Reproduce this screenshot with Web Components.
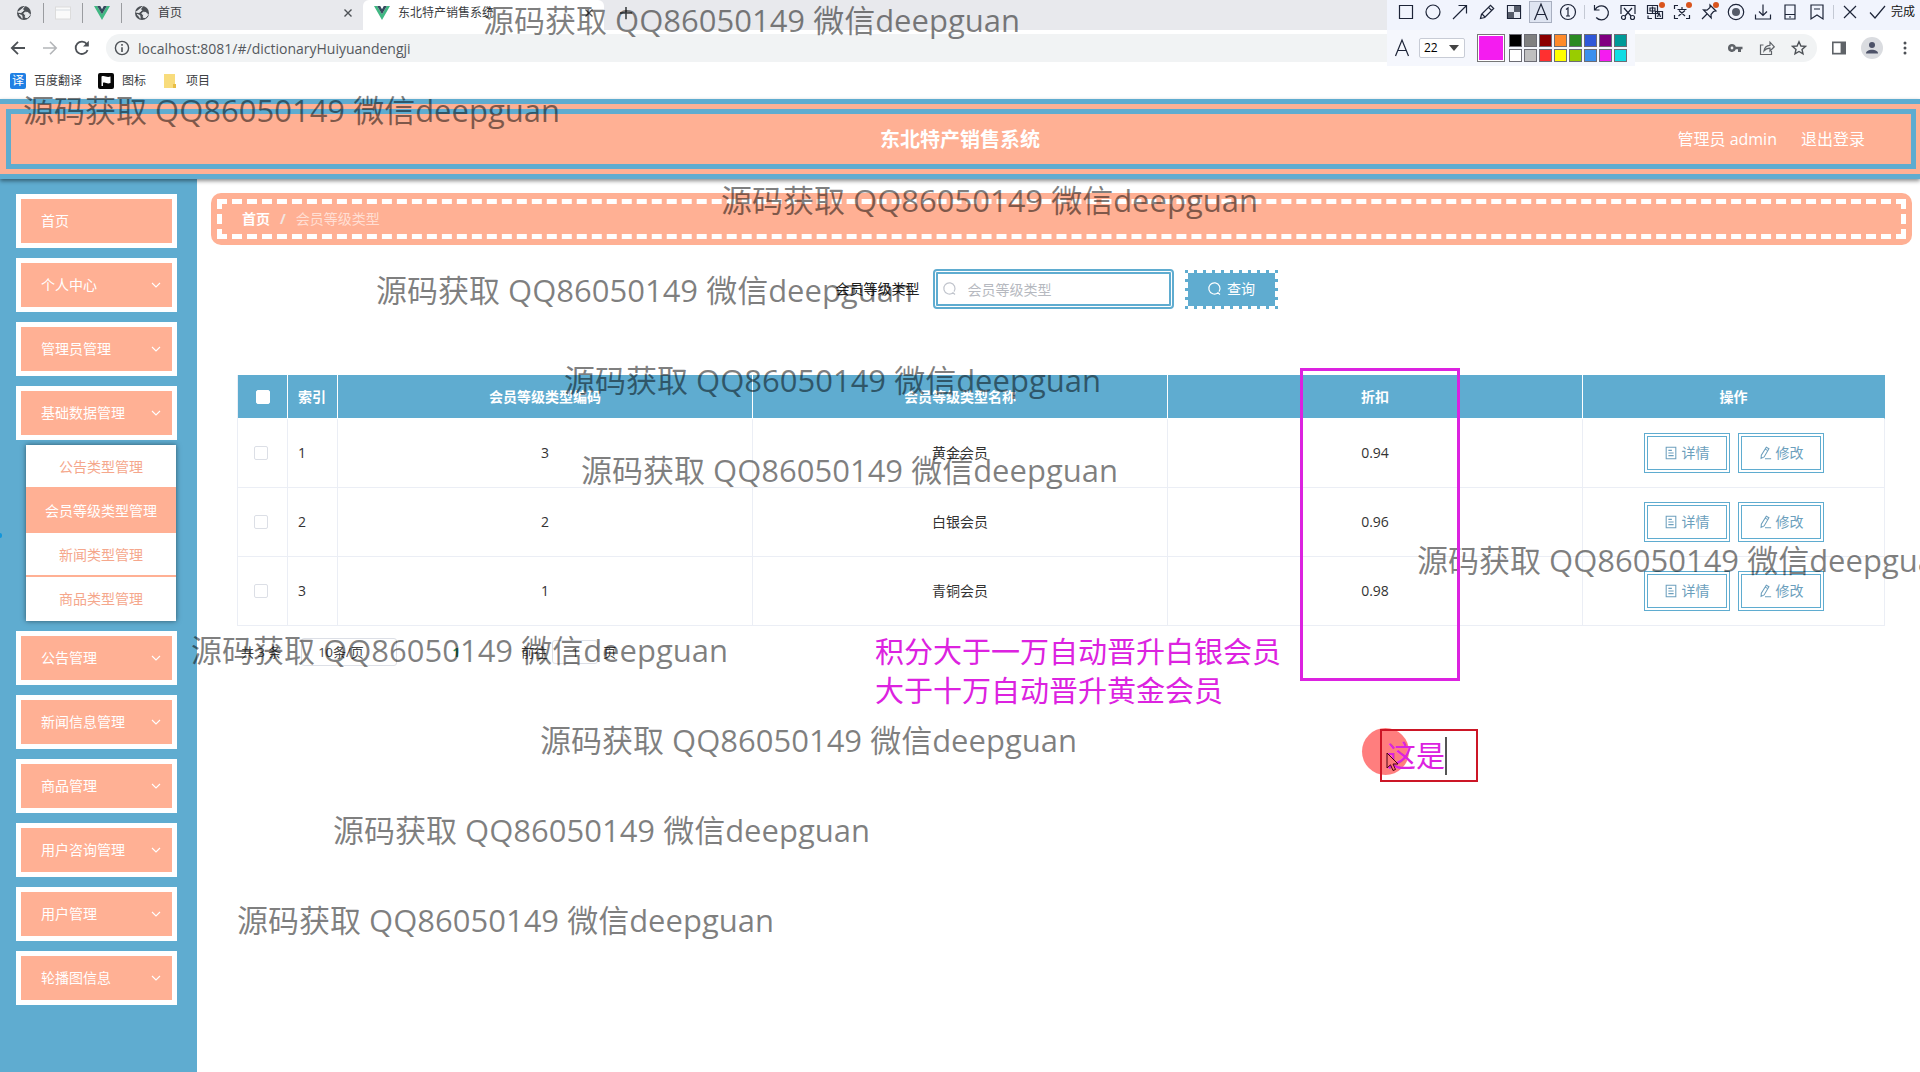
<!DOCTYPE html>
<html lang="zh-CN">
<head>
<meta charset="utf-8">
<title>东北特产销售系统</title>
<style>
  :root { --blue: #5facd0; --peach: #ffb094; --magenta: #dc22e0; }
  html, body { margin: 0; }
  body { font: 14px/20px "Open Sans", "Noto Sans CJK SC", sans-serif; color: #333; background: #fff; }
</style>
</head>
<body>
<desktop-view></desktop-view>
<script>
class Base extends HTMLElement {
  constructor() {
    super();
    this.attachShadow({ mode: 'open' }).innerHTML =
      `<style>*{box-sizing:border-box}button,input,select{font:inherit;color:inherit;margin:0}button{cursor:pointer}a{color:inherit;text-decoration:none}svg{display:block;flex:none}${this.constructor.css || ''}</style>` + this.constructor.html;
  }
}
const define = (name, css, html) => customElements.define(name, class extends Base { static css = css; static html = html; });

/* ---------- icons ---------- */
const S = 'fill="none" stroke="#1d2438" stroke-width="1.2"';
const DOT = '<circle cx="17" cy="3" r="3" fill="#d9541e"/>';
const ICONS = {
  globe: ['0 0 16 16', '<circle cx="8" cy="8" r="7" fill="#4d5156"/><path d="M8.5 1.5 6.5 4l1.2 1.4L5 7.5 1.6 7M9 7.2l3 .3 2 2.2-2.5 3-2.3-.4.3-2.3L7.8 8.600zM3 9.500l2.800.900.4 3" fill="#e8eaed" stroke="#e8eaed" stroke-width="1"/>'],
  page: ['0 0 16 16', '<rect x=".5" y="2" width="15" height="12" fill="#fafafa" stroke="#dcdcdc"/><path d="M1 5h14" stroke="#d6dce2"/>'],
  vue: ['0 0 16 16', '<path d="M0 1h3.200L8 9.300 12.800 1H16L8 15z" fill="#41b883"/><path d="M3.200 1h3L8 4.200 9.800 1h3L8 9.300z" fill="#35495e"/>'],
  close: ['0 0 16 16', '<path d="m4 4 8 8m0-8-8 8" stroke="#4d5156" stroke-width="1.600"/>'],
  plus: ['0 0 16 16', '<path d="M8 1v14M1 8h14" stroke="#3c4043" stroke-width="1.800"/>'],
  back: ['0 0 16 16', '<path d="M15 8H2m6-6.200L1.800 8 8 14.200" fill="none" stroke="#4d5156" stroke-width="1.800"/>'],
  forward: ['0 0 16 16', '<path d="M1 8h13M8 1.800 14.200 8 8 14.200" fill="none" stroke="#b4b6b9" stroke-width="1.600"/>'],
  reload: ['0 0 16 16', '<path d="M13.600 10.200A6.200 6.200 0 1 1 12.800 4" fill="none" stroke="#4d5156" stroke-width="1.800"/><path d="M14.800.8v5.800H9z" fill="#4d5156"/>'],
  info: ['0 0 16 16', '<circle cx="8" cy="8" r="6.600" fill="none" stroke="#4d5156" stroke-width="1.400"/><path d="M8 7.200V12M8 4v1.800" stroke="#4d5156" stroke-width="1.600"/>'],
  key: ['0 0 16 16', '<path d="M5 4a4 4 0 1 0 3.800 5.200H11V12h3V9.200h1.500V6.800H8.800A4 4 0 0 0 5 4zm0 2.600a1.400 1.400 0 1 1 0 2.800 1.400 1.400 0 0 1 0-2.800z" fill="#5f6368"/>'],
  share: ['0 0 16 16', '<path d="M4.500 5H1.500v9.500h11V11M5 11c.4-4 2.500-5.500 6-5.700V2.200L15.300 6.800 11 11V8.200C8 8.200 6.500 9 5 11z" fill="none" stroke="#5f6368" stroke-width="1.200"/>'],
  star: ['0 0 16 16', '<path d="m8 1.800 1.900 4.200 4.500.4L11 9.400l1 4.500-4-2.400-4 2.400 1-4.500-3.400-3 4.500-.4z" fill="none" stroke="#4d5156" stroke-width="1.400"/>'],
  panel: ['0 0 16 16', '<path d="M1 1.500h14v13H1z" fill="#5f6368"/><path d="M2.600 3.200h7v9.600h-7z" fill="#fff"/>'],
  user: ['0 0 22 22', '<circle cx="11" cy="11" r="11" fill="#dadce0"/><circle cx="11" cy="8" r="3" fill="#4d5268"/><path d="M5 16.500c0-5 12-5 12 0z" fill="#4d5268"/>'],
  more: ['0 0 16 16', '<g fill="#4d5156"><circle cx="8" cy="3" r="1.500"/><circle cx="8" cy="8" r="1.500"/><circle cx="8" cy="13" r="1.500"/></g>'],
  flag: ['0 0 16 16', '<rect width="16" height="16" rx="2" fill="#080808"/><path d="M3.500 13V3.500c3-1.500 5 1.500 9 0v6.500c-4 1.500-5-1.500-7.500-.2V13" fill="#fff"/>'],
  folder: ['0 0 16 16', '<path d="M2 1h11v14H2z" fill="#f8dc7c"/><path d="M11 11h3v4h-3z" fill="#e8bd45"/>'],
  down: ['0 0 16 16', '<path d="m4 6 4 4 4-4" fill="none" stroke="#fff" stroke-width="1.100"/>'],
  search: ['0 0 16 16', '<path d="M13 13.500 11 11.700A5.600 5.600 0 1 1 12 10.600" fill="none" stroke="currentColor" stroke-width="1.200"/>'],
  doc: ['0 0 16 16', '<path d="M2.500 1.500h11v13h-11zM5 5h4M5 8h6M5 11h6" fill="none" stroke="currentColor" stroke-width="1.200"/>'],
  edit: ['0 0 16 16', '<path d="m9.500 1.500 3 1.700-5.500 9.300-3.500 1.700.3-3.800zM8.300 3.600l3 1.700M8 14.500h7" fill="none" stroke="currentColor" stroke-width="1.200"/>'],
  tRect: ['0 0 20 20', `<path d="M3.500 3.500h13v13h-13z" ${S}/>`],
  tOval: ['0 0 20 20', `<circle cx="10" cy="10" r="7" ${S}/>`],
  tArrow: ['0 0 20 20', `<path d="M3 17 16.500 3.500M8.500 3.500h8v8" ${S}/>`],
  tPen: ['0 0 20 20', `<path d="m3.500 16.500 1-4.200 9-9 3.200 3.200-9 9zM11.500 5.300l3.200 3.200M5 12l3 3" ${S}/>`],
  tMosaic: ['0 0 20 20', `<path d="M3.500 3.500h13v13h-13z" ${S}/><path d="M10 4h6v6h-6zM4 10h6v6H4z" fill="#555b69"/><path d="M4 4h6v6H4zM10 10h6v6h-6z" fill="#e4e8f2"/>`],
  tText: ['0 0 20 20', `<path d="M3.500 18 10 2l6.500 16M6 12.500h8" ${S}/>`],
  tNum: ['0 0 20 20', `<circle cx="10" cy="10" r="7.500" ${S}/><path d="m8 7.500 2-1.500v8M8 14h4" ${S}/>`],
  tUndo: ['0 0 20 20', `<path d="M3.500 3v5h5M4 8a7 7 0 1 1 1.200 7.500" ${S}/>`],
  tCut: ['0 0 20 20', `<path d="M3 12V3.500h14V12M6 6l7 8m1-8-7 8" ${S}/><circle cx="5.500" cy="15.500" r="2" ${S}/><circle cx="14.500" cy="15.500" r="2" ${S}/>`],
  tTrans: ['0 0 20 20', `<path d="M2.500 3.500h10v8h-10zM5 6h5v3H5zM7.500 4.500v7M10.500 9.500h7v7h-7zM12.500 15l1.500-4 1.500 4M3 13.500v3h4" ${S}/>${DOT}`],
  tOcr: ['0 0 20 20', `<path d="M2.500 7V3.500H6M2.500 13v3.500H6M17.500 13v3.500H14M5.500 7.500h9M10 5v2.500M7 8.500l6 5.500m0-5.500L6.500 14" ${S}/>${DOT}`],
  tPin: ['0 0 20 20', `<path d="m11 3 6 6-2.500.5-2.500 3 .2 3.500L4.500 8l3.500.2 3-2.700zM8 12l-5 5" ${S}/>${DOT}`],
  tRec: ['0 0 20 20', `<circle cx="10" cy="10" r="7.700" ${S}/><circle cx="10" cy="10" r="4" fill="#555b69"/>`],
  tSave: ['0 0 20 20', `<path d="M10 2.500v11M6 9.500l4 4 4-4M2.500 12.500v4.500h15v-4.500" ${S}/>`],
  tPhone: ['0 0 20 20', `<path d="M5 3h10v14H5zM5 12.500h10M9 15h2" ${S}/>`],
  tMark: ['0 0 20 20', `<path d="M4 3h12v14l-6-4-6 4zM7 7h6" ${S}/>`],
  tX: ['0 0 20 20', `<path d="m4 4 12 12M16 4 4 16" ${S}/>`],
  tOk: ['0 0 20 20', `<path d="m3 10.500 5 5.500 10-12" ${S}/>`]
};
customElements.define('ui-icon', class extends HTMLElement {
  connectedCallback() {
    const [vb, body] = ICONS[this.getAttribute('name')];
    const s = this.getAttribute('size') || 16;
    this.attachShadow({ mode: 'open' }).innerHTML =
      `<style>:host{display:block;flex:none}svg{display:block}</style><svg width="${s}" height="${s}" viewBox="${vb}" aria-hidden="true">${body}</svg>`;
  }
});
const ic = (n, s = 16) => `<ui-icon name="${n}" size="${s}"></ui-icon>`;

/* ---------- browser window ---------- */
define('browser-bar', `
  :host{display:block;color:#3c4043;background:#fff}
  .tabs{display:flex;align-items:center;height:30px;background:#e8e9ed;font-size:12px;line-height:24px;padding:0 0 4px 16px}
  .mini{display:flex;gap:11px;align-items:center}
  .mini i{width:1px;height:20px;background:#9a9ca0}
  .tab{display:flex;align-items:center;gap:8px}
  .tab span{flex:1}
  .first{width:229px;margin-left:12px;padding-right:8px}
  .on{width:241px;margin-bottom:-4px;height:30px;background:#fff;border-radius:6px 6px 0 0;padding:0 8px 4px 11px}
  .plus{margin-left:15px}
  .nav{display:flex;align-items:center;height:36px;padding:0 7px 0 10px}
  .nav>ui-icon{margin-right:16px}
  .addr{flex:1;display:flex;align-items:center;gap:8px;height:28px;border-radius:14px;background:#f1f3f4;padding:0 10px 0 8px}
  .addr input{flex:1;border:0;background:none;padding:0;font-size:14px;height:28px;color:#55595e;outline:0}
  .acts{display:flex;gap:16px}
  .end{display:flex;align-items:center;gap:14px;margin-left:14px}
  .marks{display:flex;gap:16px;height:33px;padding:0 10px 4px;align-items:center;font-size:12px}
  .marks a{display:flex;gap:8px;align-items:center}
  .tr{width:16px;height:16px;border-radius:2px;background:#2080e4;color:#fff;text-align:center;line-height:16px}
`, `
  <div class="tabs">
    <div class="mini">${ic('globe')}<i></i>${ic('page')}<i></i>${ic('vue')}<i></i></div>
    <div class="tab first">${ic('globe')}<span>首页</span>${ic('close', 14)}</div>
    <div class="tab on">${ic('vue')}<span>东北特产销售系统</span>${ic('close', 14)}</div>
    <div class="plus">${ic('plus', 14)}</div>
  </div>
  <div class="nav">
    ${ic('back')}${ic('forward')}${ic('reload')}
    <div class="addr">${ic('info')}<input aria-label="地址" value="localhost:8081/#/dictionaryHuiyuandengji">
      <div class="acts">${ic('key')}${ic('share')}${ic('star')}</div></div>
    <div class="end">${ic('panel')}${ic('user', 22)}${ic('more')}</div>
  </div>
  <nav class="marks">
    <a href="#"><span class="tr">译</span>百度翻译</a><a href="#">${ic('flag')}图标</a><a href="#">${ic('folder')}项目</a>
  </nav>`);

/* ---------- screenshot tool ---------- */
const tools = ['tRect','tOval','tArrow','tPen','tMosaic','tText','tNum','|','tUndo','tCut','tTrans','tOcr','tPin','tRec','tSave','tPhone','tMark','|','tX','tOk'];
const swatches = ['#000','#808080','#8b0000','#ff8a2a','#2c8a22','#3058d8','#800080','#009a98','#fff','#c0c0c0','#ff3030','#ffff00','#99cc00','#3a90ee','#f41cf0','#10dce4'];
define('capture-toolbar', `
  :host{display:block;position:absolute;top:0;right:0}
  .row{display:flex;align-items:center;height:30px;background:#f1f4fd;padding:0 4px 6px 5px;font-size:12px;color:#111}
  button{border:0;background:none;padding:0;display:flex;align-items:center;justify-content:center;width:27px;height:22px}
  button.on{width:23px;margin:0 2px;border:1px solid #a8afc0;background:#dfe5f2}
  i{width:1px;height:14px;background:#c4c9d4;margin:0 2px 0 3px}
  .done{width:26px;white-space:nowrap}
  .opt{display:flex;width:248px;height:36px;align-items:center;background:#f5f7fd;padding-left:5px}
  .size{position:relative;margin:0 12px 0 7px;display:flex;align-items:center}
  select{appearance:none;width:46px;height:20px;border:1px solid #c8ccd6;border-radius:2px;background:#fff;padding:0 4px;font-size:12px;line-height:18px;color:#000}
  .size svg{position:absolute;right:6px}
  .big{width:28px;height:28px;background:#f41cf0;border:1px solid #777;outline:1px solid #fff;outline-offset:-2px}
  .pal{display:grid;grid-template-columns:repeat(8,13px);gap:2px;margin-left:4px}
  .pal b{height:13px;border:1px solid #6c6c74}
`, `
  <div class="row">${tools.map(t => t === '|' ? '<i></i>' : `<button class="${t === 'tText' ? 'on' : ''}" aria-label="${t.slice(1)}">${ic(t, 20)}</button>`).join('')}<button class="done">完成</button></div>
  <div class="opt">${ic('tText', 20)}
    <div class="size"><select aria-label="字号"><option>22</option></select><svg width="10" height="6"><path d="M0 0h10L5 6z" fill="#444"/></svg></div>
    <div class="big"></div><div class="pal">${swatches.map(c => `<b style="background:${c}"></b>`).join('')}</div>
  </div>`);

/* ---------- application ---------- */
define('app-header', `
  :host{display:block;position:relative;background:var(--peach);border:solid var(--blue);border-width:5px 0;padding:5px 4px 5px 6px;box-shadow:0 2px 4px rgba(0,0,0,.45);color:#fff}
  .in{display:grid;grid-template-columns:1fr auto 1fr;align-items:center;height:60px;border:5px solid var(--blue);padding:0 46px 0 44px}
  h1{grid-column:2;margin:0;font-size:20px;line-height:30px;font-weight:700;padding-top:2px}
  .r{display:flex;justify-content:flex-end;gap:24px;font-size:16px;line-height:24px}
`, `<div class="in"><h1>东北特产销售系统</h1><div class="r"><span>管理员 admin</span><a href="#">退出登录</a></div></div>`);

define('side-item', `
  :host{display:block}
  button{display:flex;align-items:center;justify-content:space-between;width:100%;height:54px;border:5px solid #fff;background:var(--peach);color:#fff;padding:0 8px 0 20px;text-align:left}
  :host([plain]) ui-icon{display:none}
`, `<button><span><slot></slot></span>${ic('down')}</button>`);

define('side-menu', `
  :host{display:block;width:197px;flex:none;background:var(--blue);padding:15px 20px 67px 16px}
  nav{display:flex;flex-direction:column;gap:10px}
  .sub{margin:-5px 1px 0 10px;background:#fff;box-shadow:0 0 5px rgba(0,0,0,.5);color:#f5a78c}
  .sub a{display:block;height:44px;line-height:44px;text-align:center;border-bottom:2px solid var(--peach);white-space:nowrap}
  .sub .on{background:var(--peach);color:#fff}
  .sub a:last-child{border-color:#fff}
`, `<nav>
  <side-item plain>首页</side-item><side-item>个人中心</side-item><side-item>管理员管理</side-item><side-item>基础数据管理</side-item>
  <div class="sub"><a href="#">公告类型管理</a><a href="#" class="on">会员等级类型管理</a><a href="#">新闻类型管理</a><a href="#">商品类型管理</a></div>
  <side-item>公告管理</side-item><side-item>新闻信息管理</side-item><side-item>商品管理</side-item><side-item>用户咨询管理</side-item><side-item>用户管理</side-item><side-item>轮播图信息</side-item>
</nav>`);

define('bread-crumb', `
  :host{display:block;background:var(--peach);border-radius:10px;padding:6px}
  .in{display:flex;gap:10px;align-items:center;height:40px;border:5px dashed #fff;padding:0 20px;color:rgba(255,255,255,.6)}
  a{color:#fff;font-weight:700}i{color:#f2e6e2;font-style:normal;font-weight:700}
`, `<div class="in"><a href="#">首页</a><i>/</i><span>会员等级类型</span></div>`);

define('search-form', `
  :host{display:block}
  form{display:flex;justify-content:center;align-items:center;padding-right:10px}
  label{color:#222;margin-right:13px}
  .box{display:flex;align-items:center;gap:10px;width:241px;height:40px;border:5px double var(--blue);border-radius:4px;padding:0 4px;color:#c0c4cc}
  input{border:0;outline:0;padding:0;width:100%;min-width:0;background:none;height:28px}
  input::placeholder{color:#b6b9c0;opacity:1}
  button{display:flex;align-items:center;justify-content:center;gap:4px;width:93px;height:39px;margin-left:11px;border:3px solid transparent;color:#fff;padding:0;
    --h:repeating-linear-gradient(90deg,var(--blue) 0 3px,#fff 3px 9px);--v:repeating-linear-gradient(var(--blue) 0 3px,#fff 3px 9px);
    background:linear-gradient(var(--blue),var(--blue)) padding-box,var(--h) top/100% 3px no-repeat border-box,var(--h) bottom/100% 3px no-repeat border-box,var(--v) left/3px 100% no-repeat border-box,var(--v) right/3px 100% no-repeat border-box}
`, `<form onsubmit="return false"><label for="q">会员等级类型</label><div class="box">${ic('search')}<input id="q" placeholder="会员等级类型"></div><button>${ic('search')}查询</button></form>`);

define('line-button', `
  :host{display:block}
  button{display:flex;align-items:center;justify-content:center;gap:4px;width:86px;height:40px;border:4px double var(--blue);background:#fff;color:#6c9fbd;padding:0}
`, `<button><slot name="icon"></slot><slot></slot></button>`);

const rows = [['1','3','黄金会员','0.94'],['2','2','白银会员','0.96'],['3','1','青铜会员','0.98']];
define('level-table', `
  :host{display:block}
  table{width:100%;table-layout:fixed;border-collapse:separate;border-spacing:0;border-left:1px solid #ebeef5}
  th,td{text-align:center;padding:0;border-right:1px solid #ebeef5;border-bottom:1px solid #ebeef5}
  th{height:44px;background:var(--blue);color:#fff;font-weight:700;border-color:#fff}
  th:last-child{border-right-color:var(--blue)}
  td{height:69px;color:#333}
  .c{width:50px}.op{width:302px}
  tr>:nth-child(2){text-align:left;padding-left:10px}
  input{appearance:none;display:block;width:14px;height:14px;border:1px solid #dcdfe6;border-radius:2px;background:#fff;margin:0 0 0 16px}
  th input{margin-left:18px;border-color:#fff}
  .b{display:flex;gap:8px;justify-content:center}
`, `<table><thead><tr><th class="c"><input type="checkbox" aria-label="全选"></th><th class="c">索引</th><th>会员等级类型编码</th><th>会员等级类型名称</th><th>折扣</th><th class="op">操作</th></tr></thead>
<tbody>${rows.map(r => `<tr><td><input type="checkbox" aria-label="选择 ${r[0]}"></td>${r.map(v => `<td>${v}</td>`).join('')}<td><div class="b"><line-button><ui-icon slot="icon" name="doc" size="14"></ui-icon>详情</line-button><line-button><ui-icon slot="icon" name="edit" size="14"></ui-icon>修改</line-button></div></td></tr>`).join('')}</tbody></table>`);

define('page-pager', `
  :host{display:flex;align-items:center;height:28px;font-size:13px;color:#444;padding-left:4px}
  select{appearance:none;width:96px;height:28px;border:1px solid #dcdfe6;border-radius:3px;background:#fff;padding:0 16px;margin:0 54px 0 20px}
  button{border:0;background:none;padding:0;color:#2a8a63;font-weight:700;width:10px}
  label{display:flex;align-items:center;gap:5px;margin-left:60px}
  input{width:46px;height:24px;border:1px solid #dcdfe6;border-radius:3px;text-align:center;padding:0}
`, `<span>共 3 条</span><select aria-label="每页条数"><option>10条/页</option></select><button>1</button><label>前往<input value="1">页</label>`);

/* ---------- overlays ---------- */
define('water-mark', `
  :host{position:absolute;font-size:31px;line-height:40px;color:rgba(0,0,0,.5);white-space:nowrap;pointer-events:none}
`, `<slot></slot>`);

define('capture-notes', `
  .frame{position:absolute;left:1300px;top:368px;width:160px;height:313px;border:3px solid var(--magenta)}
  .note{position:absolute;left:875px;top:632px;margin:0;font-size:29px;line-height:39px;color:var(--magenta);white-space:nowrap}
  .edit{position:absolute;left:1380px;top:729px;display:flex;align-items:center;width:98px;height:53px;border:2px solid #cc1626;padding-left:5px}
  .edit input{width:58px;height:40px;border:0;padding:0;background:none;outline:0;font-size:29px;line-height:40px;color:var(--magenta)}
  .edit i{width:2px;height:38px;background:#555}
  .spot{position:absolute;left:1362px;top:728px;width:47px;height:47px;border-radius:50%;background:rgba(255,20,20,.55)}
  .ptr{position:absolute;left:1386px;top:752px}
`, `<div class="frame"></div><p class="note">积分大于一万自动晋升白银会员<br>大于十万自动晋升黄金会员</p>
<div class="spot"></div><div class="edit"><input aria-label="标注文字" value="这是"><i></i></div>
<svg class="ptr" width="13" height="20"><path d="M1 1v15l3.500-3.200L7 18.500l2.500-1-2.500-5.500h5z" fill="#f77" stroke="#4a0010"/></svg>`);

const marks = [[483,0],[23,90],[721,180],[376,270],[564,360],[581,450],[1417,540],[191,630],[540,720],[333,810],[237,900]];
define('desktop-view', `
  :host{display:flex;flex-direction:column;position:relative;min-height:100vh;overflow:hidden}
  .body{display:flex;flex:1}
  main{flex:1;min-width:0;padding:14px 8px 40px 14px}
  search-form{margin:24px 0 66px}
  .list{padding:0 27px 0 26px}
  page-pager{margin-top:12px}
  .dot{position:absolute;left:0;top:533px;width:2px;height:5px;border-radius:0 3px 3px 0;background:#1296db}
`, `<browser-bar></browser-bar><app-header></app-header>
<div class="body"><side-menu></side-menu><main><bread-crumb></bread-crumb><search-form></search-form>
<div class="list"><level-table></level-table><page-pager></page-pager></div></main></div>
<div class="dot"></div><capture-toolbar></capture-toolbar>
${marks.map(([x, y]) => `<water-mark style="left:${x}px;top:${y}px">源码获取 QQ86050149 微信deepguan</water-mark>`).join('')}
<capture-notes></capture-notes>`);
</script>
</body>
</html>
